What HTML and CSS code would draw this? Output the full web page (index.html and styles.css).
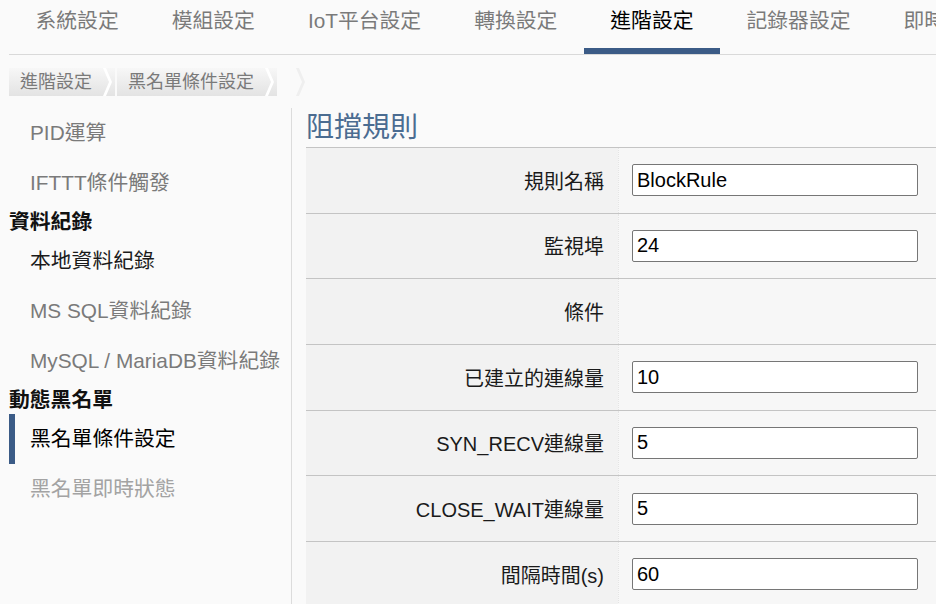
FILE: index.html
```html
<!DOCTYPE html>
<html>

<head>
    <meta charset="utf-8">
    <title>進階設定 - 黑名單條件設定</title>

    <link rel="stylesheet" href="styles.css">
</head>

<body>
    <div class="page">
        <ul class="tabs">
            <li class="tab">系統設定</li>
            <li class="tab">模組設定</li>
            <li class="tab">IoT平台設定</li>
            <li class="tab">轉換設定</li>
            <li class="tab active">進階設定</li>
            <li class="tab">記錄器設定</li>
            <li class="tab">即時狀態</li>
        </ul>

        <div class="crumbs">
            <span class="crumb">進階設定</span>
            <span class="crumb">黑名單條件設定</span>
            <span class="crumb crumb-end"></span>
        </div>

        <div class="layout">
            <nav class="side">
                <a class="side-item">PID運算</a>
                <a class="side-item">IFTTT條件觸發</a>
                <div class="side-head">資料紀錄</div>
                <a class="side-item dark">本地資料紀錄</a>
                <a class="side-item">MS SQL資料紀錄</a>
                <a class="side-item">MySQL / MariaDB資料紀錄</a>
                <div class="side-head">動態黑名單</div>
                <a class="side-item active">黑名單條件設定</a>
                <a class="side-item muted">黑名單即時狀態</a>
            </nav>

            <main class="main">
                <h2 class="title">阻擋規則</h2>

                <div class="form">
                    <div class="row">
                        <div class="label">規則名稱</div>
                        <div class="value"><input type="text" class="field" value="BlockRule"></div>
                    </div>
                    <div class="row">
                        <div class="label">監視埠</div>
                        <div class="value"><input type="text" class="field" value="24"></div>
                    </div>
                    <div class="row">
                        <div class="label">條件</div>
                        <div class="value"></div>
                    </div>
                    <div class="row">
                        <div class="label">已建立的連線量</div>
                        <div class="value"><input type="text" class="field" value="10"></div>
                    </div>
                    <div class="row">
                        <div class="label">SYN_RECV連線量</div>
                        <div class="value"><input type="text" class="field" value="5"></div>
                    </div>
                    <div class="row">
                        <div class="label">CLOSE_WAIT連線量</div>
                        <div class="value"><input type="text" class="field" value="5"></div>
                    </div>
                    <div class="row">
                        <div class="label">間隔時間(s)</div>
                        <div class="value"><input type="text" class="field" value="60"></div>
                    </div>
                </div>
            </main>
        </div>
    </div>
</body>

</html>
```

FILE: styles.css
```css
body {
    margin: 0;
    background-color: #fafafa; /* Page background */
    font-family: "Liberation Sans", "Noto Sans CJK TC", sans-serif;
    color: #222222;
}

.page {
    height: 604px;
    padding-left: 9px;
    overflow: hidden;
}

/* Top tab bar */
.tabs {
    display: flex;
    margin: 0;
    padding: 0;
    list-style: none;
    white-space: nowrap;
    overflow: hidden;
    border-bottom: 1px solid #d9d9d9;
}

.tab {
    flex-shrink: 0;
    padding: 0 26.5px 6px 26.5px;
    line-height: 42px;
    font-size: 20.8px;
    color: #7a7a7a;
    border-bottom: 6px solid transparent;
}

.tab.active {
    color: #000000;
    border-bottom-color: #3b5b86; /* Blue underline */
}

/* Breadcrumb */
.crumbs {
    display: flex;
    margin-top: 13px;
    height: 28px;
}

.crumb {
    position: relative;
    margin-right: 2px;
    padding: 0 23px 0 11px;
    line-height: 28px;
    font-size: 18px;
    color: #7a7a7a;
    background: linear-gradient(#f7f7f7, #e3e3e3);
}

.crumb::after {
    content: "";
    position: absolute;
    top: 0;
    right: 3px;
    width: 9px;
    height: 28px;
    background-color: #ffffff;
    clip-path: polygon(0 0, 3px 0, 100% 50%, 3px 100%, 0 100%, 6px 50%);
}

.crumb-end {
    width: 0;
    padding: 0 0 0 18px;
    background: none;
}

.crumb-end::after {
    right: -8px;
    background-color: #efefef;
}

/* Side menu + content */
.layout {
    display: flex;
    margin-top: 12px;
    height: 496px;
}

.side {
    width: 282px;
    flex-shrink: 0;
    border-right: 1px solid #dcdcdc;
}

.side-item {
    display: block;
    height: 50px;
    line-height: 50px;
    padding-left: 21px;
    font-size: 20.8px;
    color: #7a7a7a;
    white-space: nowrap;
}

.side-item.dark {
    color: #1a1a1a;
}

.side-item.muted {
    color: #a3a3a3;
}

.side-item.active {
    padding-left: 15px;
    border-left: 6px solid #3b5b86;
    color: #000000;
}

.side-head {
    line-height: 28px;
    font-size: 20.8px;
    font-weight: bold;
    color: #111111;
}

.main {
    flex: 1;
    min-width: 0;
    padding-left: 14px;
}

.title {
    margin: 0;
    height: 39px;
    line-height: 39px;
    font-size: 28px;
    font-weight: normal;
    color: #4b6c91;
}

.form {
    border-top: 1px solid #c4c4c4;
}

.row {
    display: flex;
    height: 64.67px;
    border-bottom: 1px solid #c4c4c4;
}

.label {
    display: flex;
    align-items: center;
    justify-content: flex-end;
    width: 312px;
    box-sizing: border-box;
    padding-right: 14px;
    background-color: #f2f2f2;
    font-size: 20px;
    color: #1a1a1a;
    white-space: nowrap;
}

.value {
    display: flex;
    align-items: center;
    flex: 1;
    padding-left: 13px;
    background-color: #f7f7f7;
    border-left: 1px dotted #e4e4e4;
}

.field {
    width: 286px;
    height: 32px;
    box-sizing: border-box;
    padding: 0 4px;
    border: 1px solid #767676;
    border-radius: 2px;
    background-color: #ffffff;
    font-family: "Liberation Sans", sans-serif;
    font-size: 20px;
    color: #000000;
}
```
